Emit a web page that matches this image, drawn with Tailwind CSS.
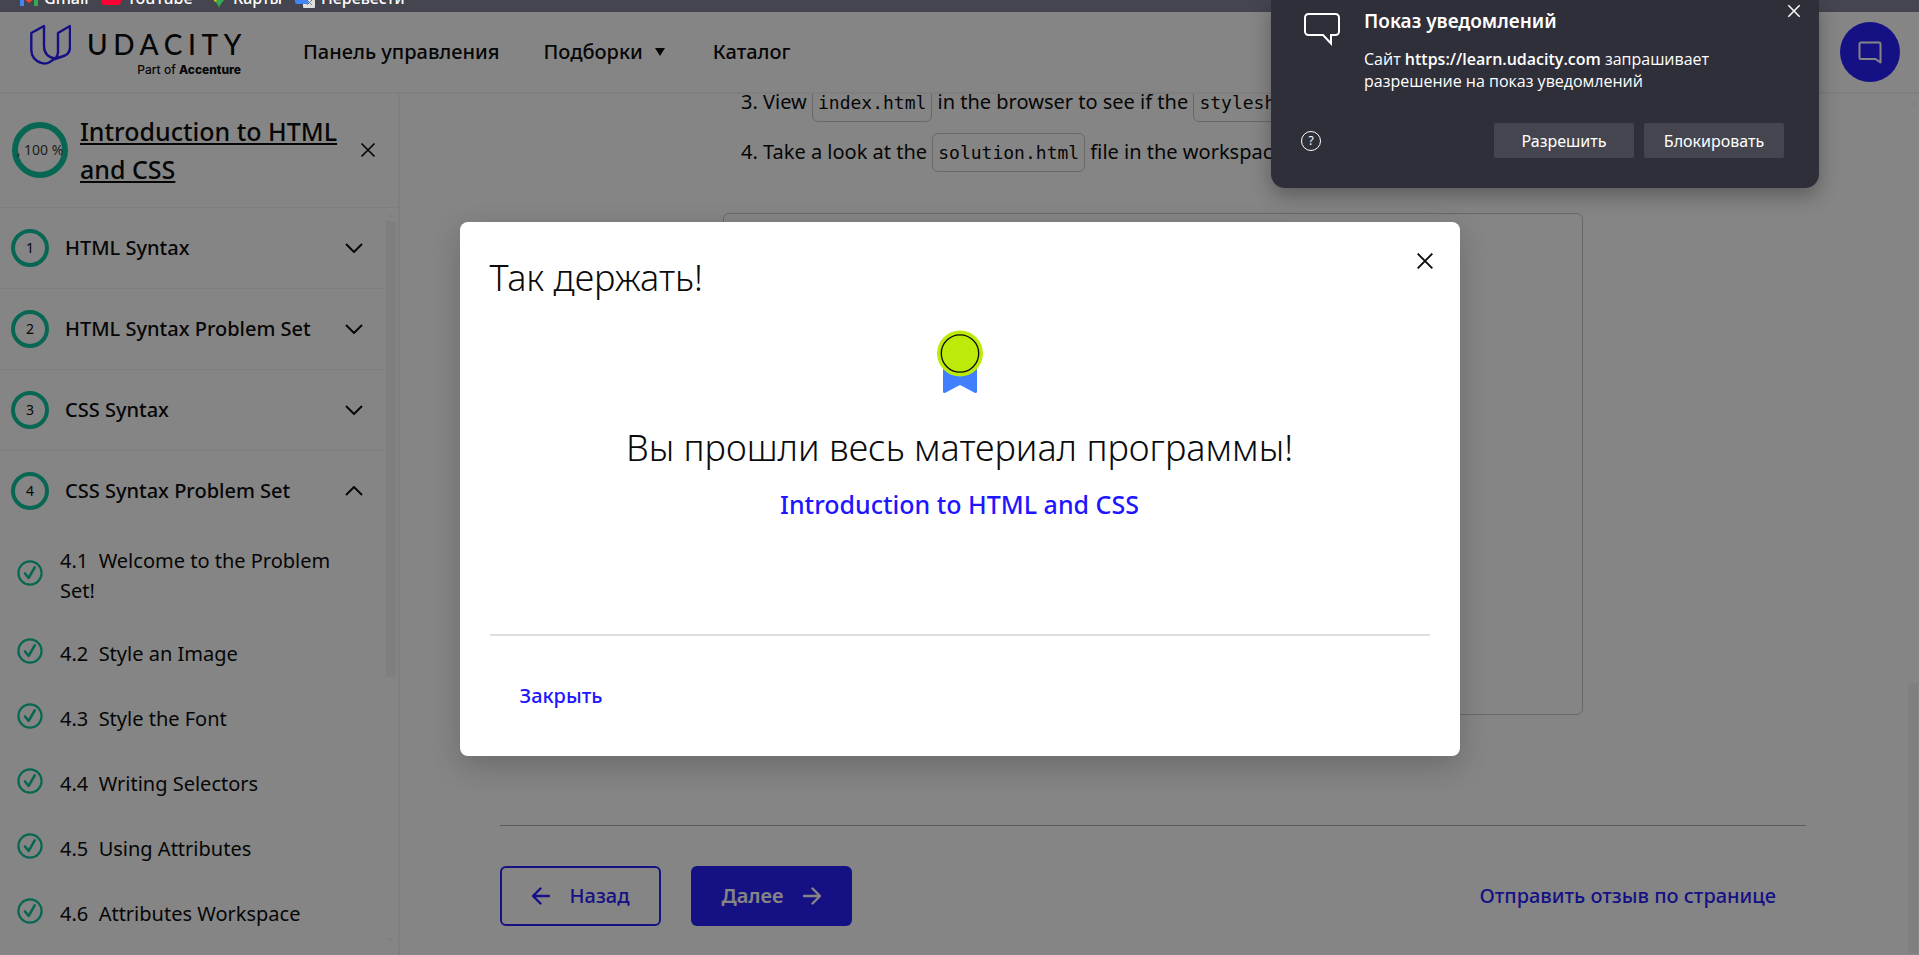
<!DOCTYPE html>
<html lang="ru">
<head>
<meta charset="utf-8">
<title>Introduction to HTML and CSS - Udacity</title>
<script src="https://cdn.jsdelivr.net/npm/@tailwindcss/browser@4"></script>
</head>
<body class="relative flex h-screen flex-col overflow-hidden bg-white font-['Noto_Sans','Open_Sans',sans-serif] text-black">
<svg class="hidden">
  <symbol id="chevron" viewBox="0 0 18 10"><path d="M1 1l8 8 8-8" fill="none" stroke="currentColor" stroke-width="2"/></symbol>
  <symbol id="cross" viewBox="0 0 16 16"><path d="M1.500 1.500l13 13M14.500 1.500l-13 13" fill="none" stroke="currentColor" stroke-width="1.700"/></symbol>
  <symbol id="check" viewBox="0 0 26 26"><circle cx="13" cy="13" r="11.600" fill="none" stroke="currentColor" stroke-width="2.200"/><path d="M8 13.500l3.700 4.300 6-10.500" fill="none" stroke="currentColor" stroke-width="2.600" stroke-linecap="round" stroke-linejoin="round"/></symbol>
  <symbol id="arrow" viewBox="0 0 18 18"><path d="M1 9h15.500M9.500 1.500L17 9l-7.500 7.500" fill="none" stroke="currentColor" stroke-width="2.400" stroke-linecap="round" stroke-linejoin="round"/></symbol>
</svg>

<!-- Bookmarks bar -->
<nav aria-label="Закладки" class="flex h-3 shrink-0 items-end gap-3 overflow-hidden bg-[#45454f] pl-5 text-base font-medium leading-5 text-white">
  <a href="#" class="flex w-[69px] items-center gap-1 pb-1"><svg class="h-4 w-5" viewBox="0 0 20 16"><path d="M0 2h4v14H0z" fill="#4285f4"/><path d="M14 2h4v14h-4z" fill="#34a853"/><path d="M0 2l9 7 9-7v4l-9 7-9-7z" fill="#ea4335"/></svg>Gmail</a>
  <a href="#" class="flex w-[98px] items-center gap-1.5 pb-1"><svg class="h-4 w-5 shrink-0" viewBox="0 0 20 16"><rect width="20" height="15" rx="4" fill="#ff0033"/></svg>YouTube</a>
  <a href="#" class="flex w-[72px] items-center gap-1.5 pb-1"><svg class="h-5 w-4 shrink-0" viewBox="0 0 16 20"><path d="M8 20C7 15 1 12 1 7a7 7 0 0114 0c0 5-6 8-7 13z" fill="#34a853"/><path d="M1.500 10L8 4v6l-4 4z" fill="#fbbc04"/></svg>Карты</a>
  <a href="#" class="flex items-center gap-1.5 pb-1"><svg class="h-5 w-5 shrink-0" viewBox="0 0 20 20"><rect x="8" y="6" width="12" height="14" rx="1" fill="#e0e0e0"/><path d="M0 0h10l4 16H2a2 2 0 01-2-2z" fill="#4285f4"/><path d="M12 12l5 5m0-5l-5 5" stroke="#607d8b"/></svg>Перевести</a>
</nav>

<div class="relative flex min-h-0 flex-1 flex-col">
  <header class="flex h-[82px] shrink-0 items-center border-b-2 border-[#f3f3f3] text-xl font-medium">
    <a href="#" aria-label="Udacity" class="ml-7 flex h-full w-[216px] items-start gap-4 pt-3">
      <svg class="h-[42px] w-[43px] shrink-0" viewBox="0 0 43 42" fill="none" stroke="#2015ff" stroke-width="2.400" stroke-linejoin="round"><path d="M3.300 9L16 2v20c0 6 3 11 11 12.500l-6 4c-2 1-4.500 1.300-7 .6C7 37.500 3.300 32 3.300 26z"/><path d="M30 9l12-7v21c0 4-2 7-5 8.500L27 35c2-2 3-4 3-7z"/></svg>
      <span class="flex flex-col items-end pt-1.5">
        <span class="-mr-1.5 font-['Lato',sans-serif] text-[28px] font-medium leading-7 tracking-[0.2em]">UDACITY</span>
        <span class="pt-0.5 font-['Inter',sans-serif] text-xs leading-5">Part of <b class="font-extrabold">Accenture</b></span>
      </span>
    </a>
    <nav class="ml-[59px] flex items-center gap-11">
      <a href="#">Панель управления</a>
      <button class="flex items-center gap-3">Подборки <svg class="h-2 w-2.5" viewBox="0 0 10 8"><path d="M0 0h10L5 8z"/></svg></button>
      <a href="#" class="ml-1">Каталог</a>
    </nav>
    <div class="ml-auto flex h-full items-center border-l border-[#f3f3f3] px-[19px]">
      <button aria-label="Чат" class="flex size-[60px] items-center justify-center rounded-full bg-[#2015ff] text-white"><svg class="size-6" viewBox="0 0 24 24" fill="none" stroke="currentColor" stroke-width="2" stroke-linejoin="round"><path d="M3 2.500h18a1.500 1.500 0 011.500 1.500v18.500l-5-3.500H3a1.500 1.500 0 01-1.500-1.500V4A1.500 1.500 0 013 2.500z"/></svg></button>
    </div>
  </header>

  <div class="flex min-h-0 flex-1">
    <aside class="flex w-[400px] shrink-0 flex-col border-r-2 border-[#f3f3f3]">
      <div class="flex h-[114px] shrink-0 items-center gap-3 border-b border-[#f3f3f3] pb-0.5 pl-3">
        <div class="flex size-14 shrink-0 items-center justify-center whitespace-nowrap rounded-full border-6 border-[#02c39a] text-sm text-[#333]">, 100 %</div>
        <a href="#" class="w-[268px] text-[25px] font-medium leading-[38px] underline decoration-2 underline-offset-2">Introduction to HTML and CSS</a>
        <button aria-label="Закрыть меню"><svg class="size-4"><use href="#cross"/></svg></button>
      </div>
      <div class="flex min-h-0 flex-1 justify-between">
        <div class="w-[384px] overflow-hidden">
          <button class="flex h-[81px] w-full items-center border-b border-[#f3f3f3] pl-[11px] pr-[21px] text-left text-xl font-medium"><span class="mr-4 flex size-[38px] items-center justify-center rounded-full border-4 border-[#02c39a] text-sm font-normal">1</span><span class="flex-1">HTML Syntax</span><svg class="h-2.5 w-[18px]"><use href="#chevron"/></svg></button>
          <button class="flex h-[81px] w-full items-center border-b border-[#f3f3f3] pl-[11px] pr-[21px] text-left text-xl font-medium"><span class="mr-4 flex size-[38px] items-center justify-center rounded-full border-4 border-[#02c39a] text-sm font-normal">2</span><span class="flex-1">HTML Syntax Problem Set</span><svg class="h-2.5 w-[18px]"><use href="#chevron"/></svg></button>
          <button class="flex h-[81px] w-full items-center border-b border-[#f3f3f3] pl-[11px] pr-[21px] text-left text-xl font-medium"><span class="mr-4 flex size-[38px] items-center justify-center rounded-full border-4 border-[#02c39a] text-sm font-normal">3</span><span class="flex-1">CSS Syntax</span><svg class="h-2.5 w-[18px]"><use href="#chevron"/></svg></button>
          <button class="flex h-20 w-full items-center pl-[11px] pr-[21px] text-left text-xl font-medium"><span class="mr-4 flex size-[38px] items-center justify-center rounded-full border-4 border-[#02c39a] text-sm font-normal">4</span><span class="flex-1">CSS Syntax Problem Set</span><svg class="h-2.5 w-[18px] rotate-180"><use href="#chevron"/></svg></button>
          <ul class="text-xl leading-[30px]">
            <li><a href="#" class="flex h-[90px] items-center gap-[17px] pl-[17px] pr-10"><svg class="mb-1.5 size-[26px] shrink-0 text-[#02c39a]"><use href="#check"/></svg><span>4.1&nbsp; Welcome to the Problem Set!</span></a></li>
            <li><a href="#" class="flex h-[65px] items-center gap-[17px] pl-[17px]"><svg class="mb-1.5 size-[26px] shrink-0 text-[#02c39a]"><use href="#check"/></svg><span>4.2&nbsp; Style an Image</span></a></li>
            <li><a href="#" class="flex h-[65px] items-center gap-[17px] pl-[17px]"><svg class="mb-1.5 size-[26px] shrink-0 text-[#02c39a]"><use href="#check"/></svg><span>4.3&nbsp; Style the Font</span></a></li>
            <li><a href="#" class="flex h-[65px] items-center gap-[17px] pl-[17px]"><svg class="mb-1.5 size-[26px] shrink-0 text-[#02c39a]"><use href="#check"/></svg><span>4.4&nbsp; Writing Selectors</span></a></li>
            <li><a href="#" class="flex h-[65px] items-center gap-[17px] pl-[17px]"><svg class="mb-1.5 size-[26px] shrink-0 text-[#02c39a]"><use href="#check"/></svg><span>4.5&nbsp; Using Attributes</span></a></li>
            <li><a href="#" class="flex h-[65px] items-center gap-[17px] pl-[17px]"><svg class="mb-1.5 size-[26px] shrink-0 text-[#02c39a]"><use href="#check"/></svg><span>4.6&nbsp; Attributes Workspace</span></a></li>
          </ul>
        </div>
        <div class="mr-0.5 flex w-2.5 flex-col items-center py-1.5">
          <svg class="h-[3px] w-1.5" viewBox="0 0 6 3"><path d="M0 3l3-3 3 3z" fill="#f3f3f3"/></svg>
          <div class="mt-1 h-[62%] w-full bg-[#f3f3f3]"></div>
          <svg class="mb-2 mt-auto h-[3px] w-1.5" viewBox="0 0 6 3"><path d="M0 0l3 3 3-3z" fill="#f3f3f3"/></svg>
        </div>
      </div>
    </aside>

    <main class="flex min-w-0 flex-1 flex-col overflow-hidden px-[100px]">
      <div class="mx-auto flex w-full max-w-[860px] flex-col">
        <ol class="-mt-[17px] ml-[18px] overflow-visible whitespace-nowrap text-xl leading-[50px]">
          <li>3. View <code class="rounded-md border border-[#c5c5c5] px-[5px] py-2 font-['DejaVu_Sans_Mono',monospace] text-lg">index.html</code> in the browser to see if the <code class="rounded-md border border-[#c5c5c5] px-[5px] py-2 font-['DejaVu_Sans_Mono',monospace] text-lg">stylesheet</code> is linked</li>
          <li>4. Take a look at the <code class="rounded-md border border-[#c5c5c5] px-[5px] py-2 font-['DejaVu_Sans_Mono',monospace] text-lg">solution.html</code> file in the workspace</li>
        </ol>
        <div class="mt-9 h-[502px] rounded-md border border-[#c5c5c5]"></div>
      </div>
      <footer class="mt-[110px] flex items-center gap-[30px] border-t border-[#aaa] pt-10 text-xl font-semibold">
        <a href="#" class="flex h-[60px] w-[161px] items-center justify-center gap-5 rounded-md border-2 border-[#2015ff] font-medium text-[#2015ff]"><svg class="size-[18px] rotate-180"><use href="#arrow"/></svg>Назад</a>
        <a href="#" class="flex h-[60px] w-[161px] items-center justify-center gap-5 rounded-md bg-[#2015ff] text-white">Далее<svg class="size-[18px]"><use href="#arrow"/></svg></a>
        <a href="#" class="ml-auto mr-[30px] font-medium text-[#2015ff]">Отправить отзыв по странице</a>
      </footer>
    </main>
    <div class="flex w-[13px] flex-col items-center justify-between py-2">
      <svg class="h-[3px] w-1.5" viewBox="0 0 6 3"><path d="M0 3l3-3 3 3z" fill="#f3f3f3"/></svg>
      <div class="-mb-1.5 h-[32%] w-2.5 bg-[#f3f3f3]"></div>
    </div>
  </div>

  <!-- Completion dialog -->
  <div class="absolute inset-0 flex items-start justify-center bg-[#0b0b0b]/50 pt-[210px]">
    <section role="dialog" aria-labelledby="dlg-title" class="w-full max-w-[1000px] rounded-lg bg-white px-[30px] pb-[30px] pt-[30px] text-[#0b0b0b] shadow-[0_10px_30px_rgba(0,0,0,0.2)]">
      <div class="flex items-start justify-between">
        <h2 id="dlg-title" class="text-4xl font-light leading-[52px]">Так держать!</h2>
        <button aria-label="Закрыть окно" class="-mr-1"><svg class="size-[18px]"><use href="#cross"/></svg></button>
      </div>
      <div class="flex flex-col items-center pt-[26px] text-center">
        <svg class="h-[64px] w-12" viewBox="0 0 48 64"><path d="M7 36h34v25.500c0 1.400-1.200 1.800-2.300 1.200L24 55 9.300 62.700C8.200 63.300 7 62.900 7 61.500z" fill="#4080ff"/><circle cx="24" cy="23.500" r="23" fill="#bdea09"/><circle cx="24" cy="23.500" r="18.700" fill="none" stroke="#0b0b0b" stroke-width="1.300"/></svg>
        <p class="mt-7 text-4xl font-light leading-[52px]">Вы прошли весь материал программы!</p>
        <p class="mt-3 text-[25px] font-medium leading-9 text-[#2015ff]">Introduction to HTML and CSS</p>
      </div>
      <hr class="mt-28 border-t-2 border-[#dedede]">
      <button class="mx-[30px] mt-[30px] block h-[60px] text-xl font-medium text-[#2015ff]">Закрыть</button>
    </section>
  </div>
</div>

<!-- Browser permission prompt -->
<section role="alertdialog" aria-label="Показ уведомлений" class="absolute right-[100px] top-0 flex h-[188px] w-[548px] flex-col rounded-b-[14px] bg-[#2f2f3a] pl-[30px] pr-[35px] text-base leading-[22px] text-white shadow-[0_8px_20px_rgba(0,0,0,0.3)]">
  <div class="flex pt-2">
    <svg class="ml-[3px] mt-1 h-[34px] w-9" viewBox="0 0 36 34"><path d="M4.500 2h27A3.500 3.500 0 0135 5.500v14a3.500 3.500 0 01-3.500 3.500H27v8.500L19 23H4.500A3.500 3.500 0 011 19.500v-14A3.500 3.500 0 014.500 2z" fill="none" stroke="currentColor" stroke-width="2"/></svg>
    <div class="ml-6 flex-1">
      <h2 class="text-[19px] font-semibold leading-[26px]">Показ уведомлений</h2>
      <p class="mt-3.5 font-['Open_Sans',sans-serif]">Сайт <b class="font-semibold">https://learn.udacity.com</b> запрашивает<br>разрешение на показ уведомлений</p>
    </div>
    <button aria-label="Закрыть уведомление" class="-mr-[17px] -mt-1 self-start"><svg class="size-3.5"><use href="#cross"/></svg></button>
  </div>
  <div class="mb-[30px] mt-auto flex items-center gap-2.5">
    <button aria-label="Справка" class="mr-auto flex size-5 items-center justify-center rounded-full border border-white text-xs">?</button>
    <button class="h-[35px] w-[140px] rounded-xs bg-[#45454f]">Разрешить</button>
    <button class="h-[35px] w-[140px] rounded-xs bg-[#45454f]">Блокировать</button>
  </div>
</section>
</body>
</html>
